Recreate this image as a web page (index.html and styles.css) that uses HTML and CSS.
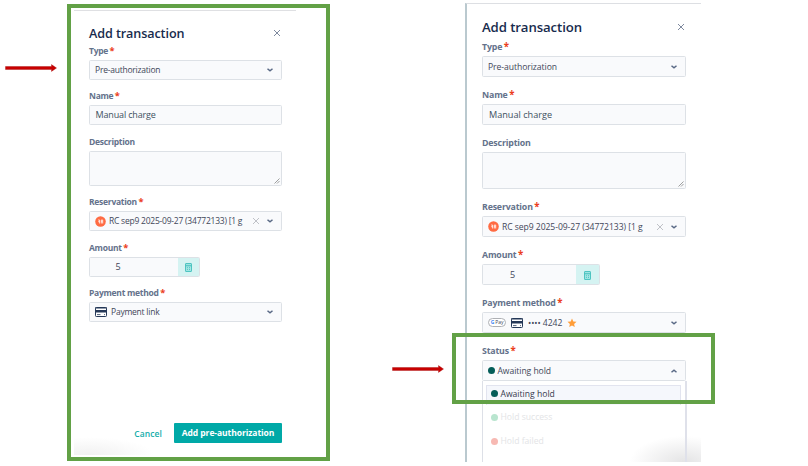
FILE: index.html
```html
<!DOCTYPE html>
<html lang="en">
<head>
<meta charset="utf-8">
<title>Add transaction</title>
<link rel="stylesheet" href="styles.css">
</head>
<body>
<svg class="defs" width="0" height="0" aria-hidden="true">
  <symbol id="close" viewBox="0 0 8 8"><path d="M1 1l6 6M7 1L1 7" fill="none" stroke="currentColor"/></symbol>
  <symbol id="chevron" viewBox="0 0 8 6"><path d="M1.500 1.700L4 3.800l2.500-2.100" fill="none" stroke="currentColor" stroke-width="1.500"/></symbol>
  <symbol id="card" viewBox="0 0 12 10"><rect x=".5" y=".5" width="11" height="9" rx=".8" fill="#fff" stroke="#253858"/><path d="M0 0.500h12v1H0zM0 3h12v2.500H0z" fill="#253858"/><path d="M2 7.600h3.500M9 7.600h1" stroke="#253858" stroke-width=".8"/></symbol>
  <symbol id="calc" viewBox="0 0 8 10"><rect x=".5" y=".5" width="7" height="9" rx=".6" fill="#a5e6e4" stroke="#36bbb8"/><path d="M1 3h6" stroke="#36bbb8"/><path d="M2.200 5.200h1M4.600 5.200h1M2.200 7.200h1M4.600 7.200h1" stroke="#36bbb8"/></symbol>
  <symbol id="grip" viewBox="0 0 6 6"><path d="M.5 5.500l5-5M3 5.500L5.500 3" stroke="#777" stroke-width=".7"/></symbol>
  <symbol id="arrow" viewBox="0 0 52 8"><path d="M.5 2.500h46V.6L51.500 4l-5 3.400V5.500H.5z" fill="#c80000" stroke="#a80f0f" stroke-width=".4"/></symbol>
  <symbol id="badge" viewBox="0 0 11 11"><circle cx="5.500" cy="5.500" r="5.300" fill="#ff6b43"/><path d="M3.200 4h1.400v3.500M3.200 5.700h1.400M6.300 7.500V4h1.400v1.700H6.300M7.700 5.700v1.800" fill="none" stroke="#fff" stroke-width=".8"/></symbol>
  <symbol id="star" viewBox="0 0 10 10"><path d="M5 .6l1.300 2.900 3.200.3-2.400 2.100.7 3.200L5 7.400 2.200 9.100l.7-3.200L.5 3.800l3.200-.3z" fill="#ff9d38"/></symbol>
</svg>

<main class="page">
  <svg class="arrow arrow-left"><use href="#arrow"/></svg>

  <section class="frame">
    <div class="panel panel-left">
      <header class="head"><h1>Add transaction</h1><svg class="x"><use href="#close"/></svg></header>
      <div class="field"><label>Type<i>*</i></label><div class="box"><span>Pre-authorization</span><svg class="chev"><use href="#chevron"/></svg></div></div>
      <div class="field"><label>Name<i>*</i></label><div class="box"><span class="typed">Manual charge</span></div></div>
      <div class="field"><label>Description</label><div class="box area"><svg class="grip"><use href="#grip"/></svg></div></div>
      <div class="field"><label>Reservation<i>*</i></label><div class="box"><svg class="badge"><use href="#badge"/></svg><span class="res">RC sep9 2025-09-27 (34772133) [1 g</span><svg class="clear"><use href="#close"/></svg><svg class="chev"><use href="#chevron"/></svg></div></div>
      <div class="field"><label>Amount<i>*</i></label><div class="box amount"><span class="value">5</span><div class="addon"><svg class="calc"><use href="#calc"/></svg></div></div></div>
      <div class="field"><label>Payment method<i>*</i></label><div class="box"><svg class="card"><use href="#card"/></svg><span class="link">Payment link</span><svg class="chev"><use href="#chevron"/></svg></div></div>
      <footer class="actions"><span class="cancel">Cancel</span><span class="submit">Add pre-authorization</span></footer>
    </div>
  </section>

  <svg class="arrow arrow-right"><use href="#arrow"/></svg>

  <section class="panel panel-right">
    <header class="head"><h1>Add transaction</h1><svg class="x"><use href="#close"/></svg></header>
    <div class="field"><label>Type<i>*</i></label><div class="box"><span>Pre-authorization</span><svg class="chev"><use href="#chevron"/></svg></div></div>
    <div class="field"><label>Name<i>*</i></label><div class="box"><span class="typed">Manual charge</span></div></div>
    <div class="field"><label>Description</label><div class="box area"><svg class="grip"><use href="#grip"/></svg></div></div>
    <div class="field"><label>Reservation<i>*</i></label><div class="box"><svg class="badge"><use href="#badge"/></svg><span class="res">RC sep9 2025-09-27 (34772133) [1 g</span><svg class="clear"><use href="#close"/></svg><svg class="chev"><use href="#chevron"/></svg></div></div>
    <div class="field"><label>Amount<i>*</i></label><div class="box amount"><span class="value">5</span><div class="addon"><svg class="calc"><use href="#calc"/></svg></div></div></div>
    <div class="field"><label>Payment method<i>*</i></label><div class="box"><span class="gpay"><b>G</b> Pay</span><svg class="card"><use href="#card"/></svg><span class="digits">•••• 4242</span><svg class="star"><use href="#star"/></svg><svg class="chev"><use href="#chevron"/></svg></div></div>
    <div class="field status"><label>Status<i>*</i></label><div class="box"><span class="dot"></span><span class="state">Awaiting hold</span><svg class="chev up"><use href="#chevron"/></svg></div></div>
    <div class="menu">
      <div class="option current"><span class="dot"></span>Awaiting hold</div>
      <div class="option faded"><span class="dot green"></span>Hold success</div>
      <div class="option faded"><span class="dot red"></span>Hold failed</div>
    </div>
  </section>
  <div class="highlight"></div>
</main>
</body>
</html>
```
FILE: styles.css
```css
* { box-sizing: border-box; }
body { margin: 0; background: #fff; font-family: "Open Sans", sans-serif; overflow: hidden; }
.defs { position: absolute; }
svg { display: block; flex: none; }
.page { position: relative; display: flex; align-items: flex-start; width: 808px; height: 466px; }
.arrow { width: 52px; height: 8px; }
.arrow-left { margin: 64px 10px 0 5px; }
.arrow-right { margin: 365px 21px 0 62px; }
.frame { width: 263px; height: 457px; margin-top: 4px; border: 4px solid #62a146; padding: 2px 30px 0 3px; }
.panel { display: flex; flex-direction: column; color: #42475a; }
.panel-left { --box: 20px; --gap: 10.300px; --area: 35.500px; --text: 8.500px; --track: -.23px; --label: 8.500px; --label-track: -.27px; width: 222px; height: 445px; border-top: 1px solid #dfe0e3; padding: 14px 14px 0 15px; background: radial-gradient(ellipse 65px 18px at 15px 100%, #f1f1f1, transparent); }
.panel-right { --box: 21px; --gap: 12px; --area: 37px; --text: 8.600px; --track: -.06px; --label: 8.800px; --label-track: -.17px; width: 236px; height: 459px; margin-top: 3px; border-top: 1px solid #dddfe3; border-left: 2px solid #bac9cf; padding: 14px 15px 0; overflow: hidden; background: radial-gradient(ellipse 55px 26px at 93% 100%, #e4e4e5, transparent); }
.head { display: flex; justify-content: space-between; align-items: center; height: 16px; margin-bottom: 4px; }
.panel-right .head { height: 18px; margin-bottom: 5px; }
h1 { margin: 0; font-size: 12.600px; font-weight: 600; line-height: 16px; color: #172b4d; white-space: nowrap; letter-spacing: -.1px; }
.panel-left h1 { padding-top: 1px; }
.panel-right h1 { font-size: 13.200px; }
.x { width: 8px; height: 8px; margin-right: 1px; color: #7e899e; }
.field { margin-bottom: var(--gap); }
label { display: block; height: 12px; margin-bottom: 3px; font-size: var(--label); letter-spacing: var(--label-track); font-weight: 700; line-height: 12px; color: #64728b; white-space: nowrap; }
label i { margin-left: 1.500px; font-style: normal; font-weight: 700; font-size: 1.100em; line-height: 10px; color: #eb3d20; }
.box { display: flex; align-items: center; height: var(--box); border: 1px solid #dde1e6; border-radius: 1.500px; padding: 0 7px 0 5px; background: #f9fafc; font-size: var(--text); letter-spacing: var(--track); white-space: nowrap; line-height: 12px; }
.typed { color: #40515f; font-size: 9px; letter-spacing: -.15px; margin-left: .5px; }
.panel-right .typed { font-size: 9.150px; letter-spacing: 0; margin-left: 1px; }
.chev { width: 8px; height: 6px; margin-left: auto; color: #596985; }
.up { transform: rotate(180deg); }
.area { height: var(--area); align-items: flex-end; justify-content: flex-end; padding: 0 1px 1px; }
.grip { width: 6px; height: 6px; }
.badge { width: 11px; height: 11px; margin-right: 3px; }
.clear { width: 8px; height: 8px; margin-left: auto; color: #bfc1c7; }
.clear + .chev { margin-left: 6px; }
.amount { width: 111px; padding: 0; }
.panel-right .amount { width: 118px; }
.value { margin-left: 25.500px; font-size: 9px; }
.panel-right .value { margin-left: 27px; }
.addon { display: flex; align-items: center; justify-content: center; align-self: stretch; width: 21px; margin-left: auto; background: #d5f3f2; }
.panel-right .addon { width: 23px; }
.calc { width: 7px; height: 9px; margin-top: 1px; }
.card { width: 12px; height: 10px; margin-right: 4px; }
.panel-right .card { margin: 0 5px; }
.gpay { width: 18px; height: 9px; border: 1px solid #aeb0b4; border-radius: 5px; background: #fff; font-size: 5px; line-height: 7px; text-align: center; letter-spacing: -.1px; }
.gpay b { color: #4285f4; }
.star { width: 10px; height: 10px; margin-left: 5px; }
.dot { width: 7px; height: 7px; margin-right: 2.500px; border-radius: 50%; background: #045d58; }
.green { background: #b9e5cf; }
.red { background: #f7b9b3; }
.actions { display: flex; align-items: center; justify-content: flex-end; margin: auto 0 12px; height: 20px; font-size: 8.500px; letter-spacing: -.07px; font-weight: 700; white-space: nowrap; }
.cancel { color: #14adaa; margin-right: 12px; font-weight: 600; letter-spacing: .1px; }
.submit { width: 108px; height: 20px; border-radius: 1px; background: #00a9a7; color: #fff; line-height: 20px; text-align: center; }
.status { margin-bottom: 0; }
.menu { width: 205px; flex: 1; margin-right: -2px; border-left: 1px solid #dde0e7; border-right: 2px solid #dfe1ea; padding: 4px 4px 0 3px; }
.option { display: flex; align-items: center; height: 24px; padding-left: 5px; font-size: var(--text); white-space: nowrap; }
.current { height: 20px; padding-left: 4px; border: 1px solid #e2e4ef; border-bottom: 0; background: #f5f7fc; padding-bottom: 4px; }
.current { color: #35394c; }
.faded { color: #e3e4e6; }
.highlight { position: absolute; left: 452px; top: 333px; width: 263px; height: 71px; border: 4px solid #62a146; }
```
